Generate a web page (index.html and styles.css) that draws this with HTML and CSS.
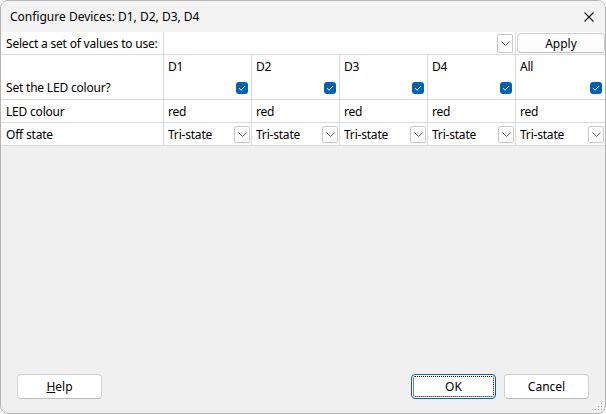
FILE: index.html
```html
<!DOCTYPE html>
<html lang="en">
<head>
<meta charset="UTF-8">
<title>Configure Devices</title>
<link rel="stylesheet" href="styles.css">
</head>
<body>

<div class="window">
  <div class="titlebar">
    <span class="title">Configure Devices: D1, D2, D3, D4</span>
    <span class="close">
      <svg width="10" height="10" viewBox="0 0 10 10"><path d="M0.5 0.5 L9.5 9.5 M9.5 0.5 L0.5 9.5" stroke="#1a1a1a" stroke-width="1.1" fill="none"/></svg>
    </span>
  </div>

  <div class="grid">
    <!-- row 1: preset chooser -->
    <div class="cell label">Select a set of values to use:</div>
    <div class="cell combo-cell">
      <span class="drop drop-tall"><svg width="9" height="5" viewBox="0 0 9 5"><path d="M0.5 0.5 L4.5 4.5 L8.5 0.5" stroke="#606060" fill="none"/></svg></span>
    </div>
    <div class="cell apply-cell"><button class="btn apply">Apply</button></div>

    <!-- row 2: device headers -->
    <div class="cell label head-label">Set the LED colour?</div>
    <div class="cell head"><span>D1</span><span class="check"><svg width="12" height="12" viewBox="0 0 12 12"><path d="M3 6.2 L5 8.2 L9 4.2" stroke="#fff" stroke-width="1" fill="none"/></svg></span></div>
    <div class="cell head"><span>D2</span><span class="check"><svg width="12" height="12" viewBox="0 0 12 12"><path d="M3 6.2 L5 8.2 L9 4.2" stroke="#fff" stroke-width="1" fill="none"/></svg></span></div>
    <div class="cell head"><span>D3</span><span class="check"><svg width="12" height="12" viewBox="0 0 12 12"><path d="M3 6.2 L5 8.2 L9 4.2" stroke="#fff" stroke-width="1" fill="none"/></svg></span></div>
    <div class="cell head"><span>D4</span><span class="check"><svg width="12" height="12" viewBox="0 0 12 12"><path d="M3 6.2 L5 8.2 L9 4.2" stroke="#fff" stroke-width="1" fill="none"/></svg></span></div>
    <div class="cell head"><span>All</span><span class="check"><svg width="12" height="12" viewBox="0 0 12 12"><path d="M3 6.2 L5 8.2 L9 4.2" stroke="#fff" stroke-width="1" fill="none"/></svg></span></div>

    <!-- row 3 -->
    <div class="cell label">LED colour</div>
    <div class="cell">red</div>
    <div class="cell">red</div>
    <div class="cell">red</div>
    <div class="cell">red</div>
    <div class="cell">red</div>

    <!-- row 4 -->
    <div class="cell label">Off state</div>
    <div class="cell select"><span>Tri-state</span><span class="drop"><svg width="9" height="5" viewBox="0 0 9 5"><path d="M0.5 0.5 L4.5 4.5 L8.5 0.5" stroke="#606060" fill="none"/></svg></span></div>
    <div class="cell select"><span>Tri-state</span><span class="drop"><svg width="9" height="5" viewBox="0 0 9 5"><path d="M0.5 0.5 L4.5 4.5 L8.5 0.5" stroke="#606060" fill="none"/></svg></span></div>
    <div class="cell select"><span>Tri-state</span><span class="drop"><svg width="9" height="5" viewBox="0 0 9 5"><path d="M0.5 0.5 L4.5 4.5 L8.5 0.5" stroke="#606060" fill="none"/></svg></span></div>
    <div class="cell select"><span>Tri-state</span><span class="drop"><svg width="9" height="5" viewBox="0 0 9 5"><path d="M0.5 0.5 L4.5 4.5 L8.5 0.5" stroke="#606060" fill="none"/></svg></span></div>
    <div class="cell select"><span>Tri-state</span><span class="drop"><svg width="9" height="5" viewBox="0 0 9 5"><path d="M0.5 0.5 L4.5 4.5 L8.5 0.5" stroke="#606060" fill="none"/></svg></span></div>
  </div>

  <div class="filler"></div>

  <div class="footer">
    <button class="btn"><u>H</u>elp</button>
    <span class="spacer"></span>
    <button class="btn default">OK</button>
    <button class="btn">Cancel</button>
  </div>

  <!-- resize grip -->
  <svg class="grip" width="8" height="8" viewBox="0 0 8 8">
    <rect x="6" y="0" width="1" height="1" fill="#a0a0a0"/>
    <rect x="3" y="3" width="1" height="1" fill="#a0a0a0"/>
    <rect x="6" y="3" width="1" height="1" fill="#a0a0a0"/>
    <rect x="0" y="6" width="1" height="1" fill="#a0a0a0"/>
    <rect x="3" y="6" width="1" height="1" fill="#a0a0a0"/>
    <rect x="6" y="6" width="1" height="1" fill="#a0a0a0"/>
  </svg>
</div>

</body>
</html>
```

FILE: styles.css
```css
  body {
    margin: 0;
    background-color: #ffffff;
    font-family: "Segoe UI", "Noto Sans", sans-serif;
    font-size: 12px;
    color: #000;
  }
  .window {
    position: relative;
    width: 606px;
    height: 414px;
    box-sizing: border-box;
    border: 1px solid #b4b4b4;
    border-radius: 8px;
    background-color: #f0f0f0;
    display: flex;
    flex-direction: column;
    overflow: hidden;
  }
  .titlebar {
    height: 31px;
    display: flex;
    align-items: center;
    justify-content: space-between;
    padding: 0 10px 0 9px;
    background-color: #f3f3f3;
  }
  .close {
    display: flex;
    margin-right: 1px;
  }
  .grid {
    display: grid;
    grid-template-columns: 162px 87px 87px 87px 87px 89px;
    grid-template-rows: 22px 44px 22px 22px;
    gap: 1px;
    background-color: #dadada;
    border-bottom: 1px solid #dadada;
    letter-spacing: -0.2px;
  }
  .cell {
    background-color: #ffffff;
    display: flex;
    align-items: center;
    padding: 0 2px 0 4px;
    white-space: nowrap;
  }
  .label {
    padding-left: 5px;
  }
  .combo-cell {
    grid-column: 2 / 6;
    justify-content: flex-end;
    padding-right: 2px;
  }
  .apply-cell {
    padding: 0 0 0 1px;
  }
  .head-label {
    align-items: flex-end;
    padding-bottom: 3px;
  }
  .head {
    flex-direction: column;
    align-items: stretch;
    justify-content: space-between;
    padding: 3px 3px 5px 4px;
  }
  .check {
    align-self: flex-end;
    display: flex;
    width: 12px;
    height: 12px;
    border-radius: 3px;
    background-color: #005fb8;
  }
  .select {
    justify-content: space-between;
    padding-right: 1px;
  }
  .drop {
    width: 14px;
    height: 15px;
    border: 1px solid #c8c8c8;
    border-radius: 2px;
    background-color: #ffffff;
    display: flex;
    align-items: center;
    justify-content: center;
  }
  .drop-tall {
    height: 17px;
  }
  .btn {
    font-family: inherit;
    font-size: 12px;
    letter-spacing: 0;
    color: #000;
    background-color: #ffffff;
    border: 1px solid #d0d0d0;
    border-bottom-color: #bcbcbc;
    border-radius: 4px;
    padding: 0;
    width: 85px;
    height: 25px;
  }
  .apply {
    width: 88px;
    height: 20px;
    background-color: #fdfdfd;
  }
  .filler {
    flex: 1;
  }
  .footer {
    display: flex;
    gap: 8px;
    padding: 0 16px 14px 16px;
  }
  .spacer {
    flex: 1;
  }
  .default {
    border: 1px solid #005fb8;
    outline: 1px dotted #000;
    outline-offset: -3px;
  }
  .grip {
    position: absolute;
    right: 2px;
    bottom: 2px;
  }
```
